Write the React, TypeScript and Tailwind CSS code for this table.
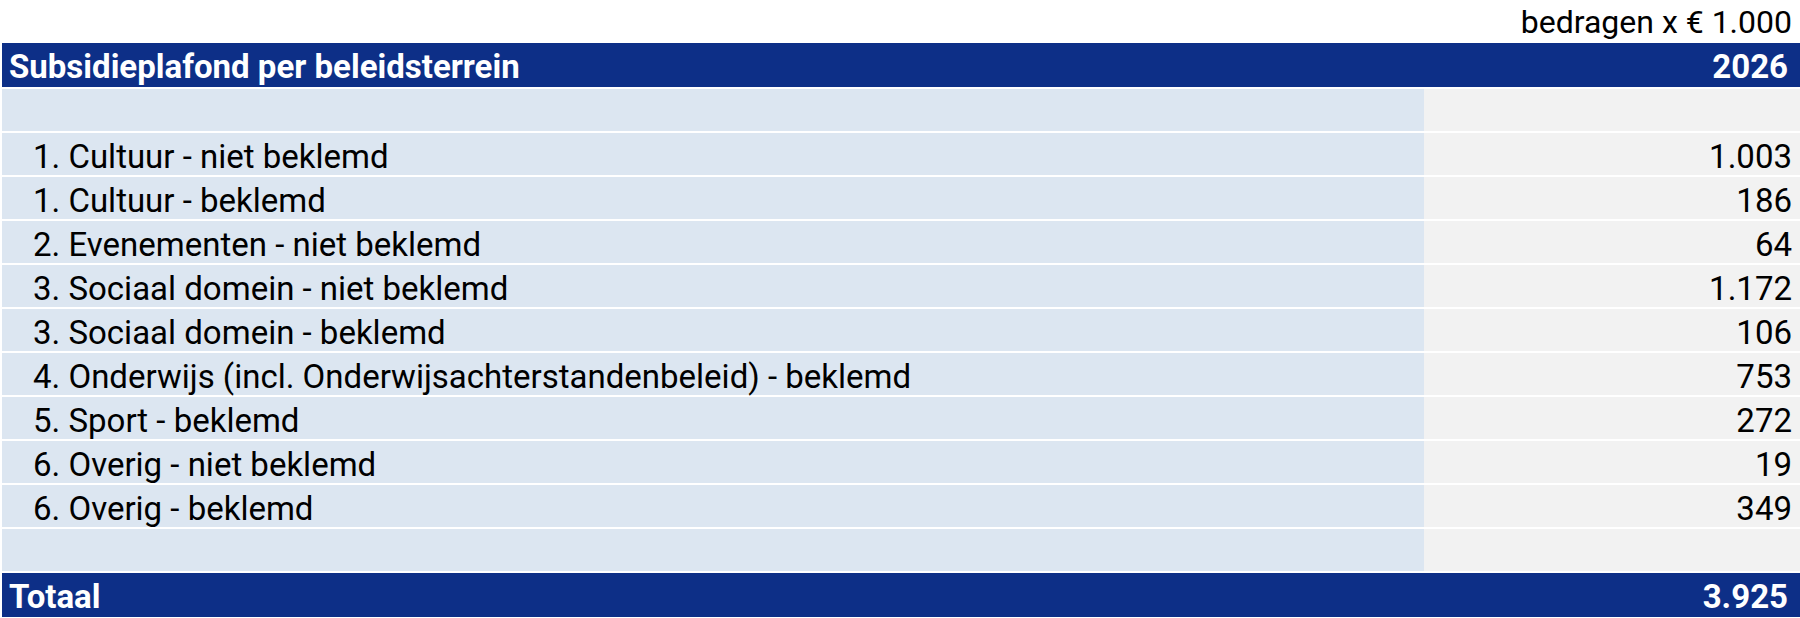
const rows: [string, string][] = [
  ["", ""],
  ["1. Cultuur - niet beklemd", "1.003"],
  ["1. Cultuur - beklemd", "186"],
  ["2. Evenementen - niet beklemd", "64"],
  ["3. Sociaal domein - niet beklemd", "1.172"],
  ["3. Sociaal domein - beklemd", "106"],
  ["4. Onderwijs (incl. Onderwijsachterstandenbeleid) - beklemd", "753"],
  ["5. Sport - beklemd", "272"],
  ["6. Overig - niet beklemd", "19"],
  ["6. Overig - beklemd", "349"],
  ["", ""],
];

export default function App() {
  return (
    <div className="w-[1800px] h-[618px] bg-white font-['Roboto',sans-serif] text-black leading-[1.15]">
      <div className="h-[43px] flex items-center justify-end pt-[2px] pr-[8px] text-[32px]">
        bedragen x € 1.000
      </div>
      <div className="pl-[2px] flex flex-col gap-[2px]">
        <div className="h-[44px] bg-[#0d2f87] text-white font-bold text-[33px] flex items-center justify-between pt-[4px] pl-[7px] pr-[12px]">
          <span>Subsidieplafond per beleidsterrein</span>
          <span>2026</span>
        </div>
        {rows.map(([label, value], i) => (
          <div key={i} className="h-[42px] flex text-[33px]">
            <div className="w-[1422px] bg-[#dce6f1] flex items-center pt-[5px] pl-[31px] whitespace-nowrap">{label}</div>
            <div className="flex-1 bg-[#f2f2f2] flex items-center justify-end pt-[5px] pr-[8px]">{value}</div>
          </div>
        ))}
        <div className="h-[44px] bg-[#0d2f87] text-white font-bold text-[33px] flex items-center justify-between pt-[4px] pl-[7px] pr-[12px]">
          <span>Totaal</span>
          <span>3.925</span>
        </div>
      </div>
    </div>
  );
}
